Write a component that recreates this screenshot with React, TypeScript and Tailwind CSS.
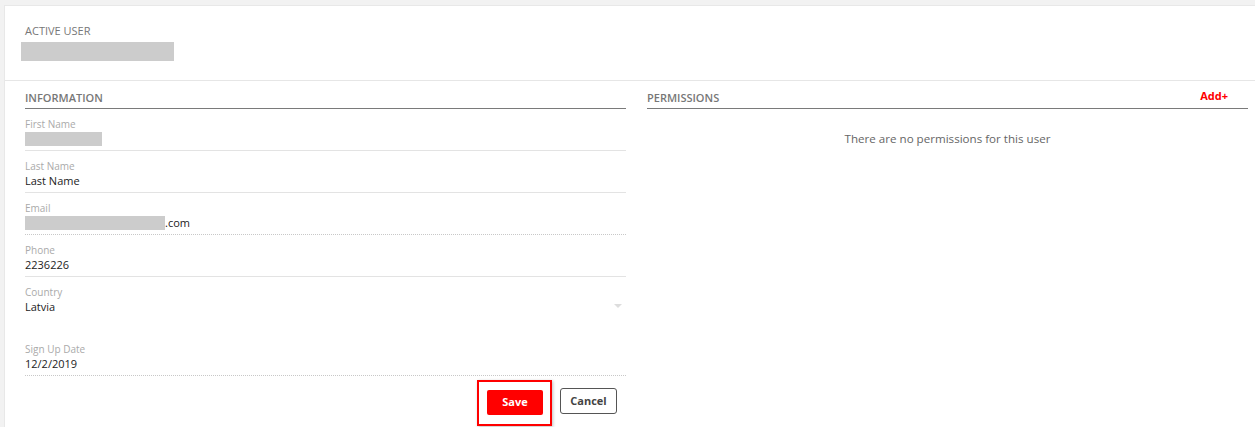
import React from "react";

type Field = {
  label: string;
  value?: string;
  redacted?: number;
  suffix?: string;
  border: "solid" | "dotted" | "none";
  select?: boolean;
  tall?: boolean;
};

const fields: Field[] = [
  { label: "First Name", redacted: 77, border: "solid" },
  { label: "Last Name", value: "Last Name", border: "solid" },
  { label: "Email", redacted: 140, suffix: ".com", border: "dotted" },
  { label: "Phone", value: "2236226", border: "solid" },
  { label: "Country", value: "Latvia", border: "none", select: true, tall: true },
  { label: "Sign Up Date", value: "12/2/2019", border: "dotted" },
];

function FieldRow({ field }: { field: Field }) {
  const borderClass =
    field.border === "solid"
      ? "border-b border-solid border-[#e3e3e3]"
      : field.border === "dotted"
      ? "border-b border-dotted border-[#c8c8c8]"
      : "border-b border-transparent";

  return (
    <div className={`relative pt-[9px] pb-[3px] ${field.tall ? "h-[57px]" : ""} ${borderClass}`}>
      <div className="text-[10px] leading-[13px] text-[#aaaaaa]">{field.label}</div>
      <div className="flex h-[16px] items-center text-[11px] leading-[16px] text-[#222]">
        {field.redacted ? (
          <span className="inline-block h-[14px] bg-[#cccccc]" style={{ width: field.redacted }} />
        ) : null}
        {field.value}
        {field.suffix}
      </div>
      {field.select && (
        <span className="absolute right-[4px] top-[27px] h-0 w-0 border-x-[4px] border-t-[4px] border-x-transparent border-t-[#dddddd]" />
      )}
    </div>
  );
}

export default function App() {
  return (
    <div
      className="h-[427px] w-full overflow-hidden bg-[#f2f2f2] pl-[4px] pt-[5px]"
      style={{ fontFamily: '"Open Sans", "Noto Sans", sans-serif' }}
    >
      <div className="h-[422px] border-l border-t border-[#e8e8e8] bg-white">
        <div className="h-[75px] border-b border-[#e6e6e6] px-[16px] pt-[18px]">
          <div className="pl-[4px] text-[11px] leading-[14px] text-[#777]">ACTIVE USER</div>
          <div className="mt-[4px] h-[19px] w-[153px] bg-[#cccccc]" />
        </div>

        <div className="flex gap-[21px] pl-[20px] pr-[7px]">
          <div className="w-[601px]">
            <div className="flex h-[28px] items-end border-b border-[#7a7a7a] pb-[3px] text-[11px] font-semibold leading-[14px] text-[#777]">
              INFORMATION
            </div>
            {fields.map((f) => (
              <FieldRow key={f.label} field={f} />
            ))}
            <div className="mt-[4px] flex justify-end pr-[9px]">
              <div className="border-2 border-[#ff0000] pl-[8px] pr-[7px] pt-[6px] pb-[9px] shadow-[1px_1px_3px_rgba(0,0,0,0.25)]">
                <button className="h-[25px] w-[56px] rounded-[2px] bg-[#ff0000] text-[11px] font-bold text-white">
                  Save
                </button>
              </div>
              <div className="ml-[8px] pt-[7px]">
                <button className="h-[26px] w-[57px] rounded-[3px] border border-[#555] bg-white text-[11px] font-bold text-[#444]">
                  Cancel
                </button>
              </div>
            </div>
          </div>

          <div className="w-[601px]">
            <div className="flex h-[28px] items-end justify-between border-b border-[#7a7a7a] pb-[3px] text-[11px] leading-[14px]">
              <span className="font-semibold text-[#777]">PERMISSIONS</span>
              <span className="mr-[20px] mb-[2px] font-bold text-[#ff0000]">Add+</span>
            </div>
            <div className="pt-[22px] text-center text-[11.6px] leading-[16px] text-[#666]">
              There are no permissions for this user
            </div>
          </div>
        </div>
      </div>
    </div>
  );
}
